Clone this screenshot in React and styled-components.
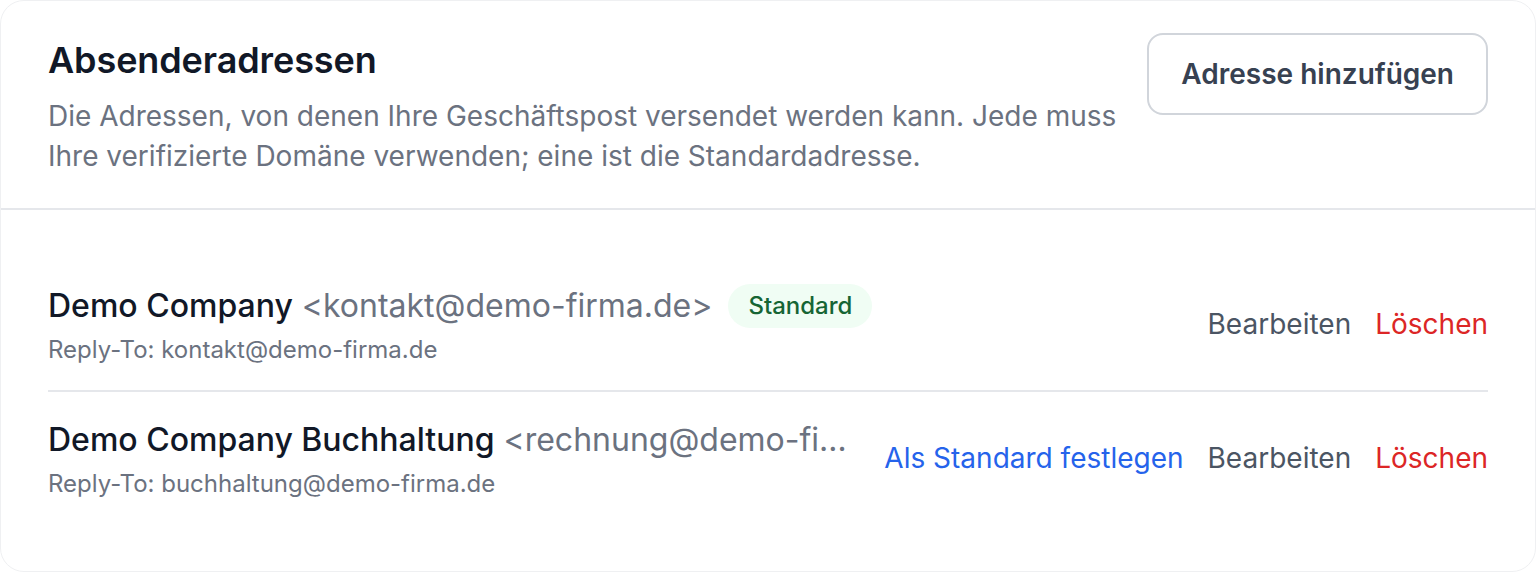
import React from 'react';
import styled, { createGlobalStyle } from 'styled-components';

const GlobalStyle = createGlobalStyle`
  html, body {
    margin: 0;
    padding: 0;
    background: #ffffff;
  }
  body {
    font-family: Inter, "Noto Sans", "Liberation Sans", sans-serif;
    -webkit-font-smoothing: antialiased;
  }
  * {
    box-sizing: border-box;
  }
`;

const senders = [
  {
    id: 1,
    name: 'Demo Company',
    email: 'kontakt@demo-firma.de',
    replyTo: 'kontakt@demo-firma.de',
    isDefault: true,
  },
  {
    id: 2,
    name: 'Demo Company Buchhaltung',
    email: 'rechnung@demo-firma.de',
    replyTo: 'buchhaltung@demo-firma.de',
    isDefault: false,
  },
];

const SenderRow = ({ sender }) => (
  <Row>
    <RowInfo>
      <NameLine>
        <NameText>
          <Name>{sender.name}</Name> <Email>&lt;{sender.email}&gt;</Email>
        </NameText>
        {sender.isDefault && <Badge>Standard</Badge>}
      </NameLine>
      <ReplyTo>Reply-To: {sender.replyTo}</ReplyTo>
    </RowInfo>
    <Actions>
      {!sender.isDefault && <LinkButton $tone="primary">Als Standard festlegen</LinkButton>}
      <LinkButton>Bearbeiten</LinkButton>
      <LinkButton $tone="danger">Löschen</LinkButton>
    </Actions>
  </Row>
);

const App = () => (
  <>
    <GlobalStyle />
    <Card>
      <Header>
        <HeaderText>
          <Title>Absenderadressen</Title>
          <Description>
            Die Adressen, von denen Ihre Geschäftspost versendet werden kann. Jede muss
            Ihre verifizierte Domäne verwenden; eine ist die Standardadresse.
          </Description>
        </HeaderText>
        <AddButton>Adresse hinzufügen</AddButton>
      </Header>
      <List>
        {senders.map(s => (
          <SenderRow key={s.id} sender={s} />
        ))}
      </List>
    </Card>
  </>
);

// Styled Components
const Card = styled.section`
  height: 572px;
  background: #ffffff;
  border: 1px solid #eff0f2;
  border-radius: 24px;
  overflow: hidden;
`;

const Header = styled.header`
  display: flex;
  align-items: flex-start;
  justify-content: space-between;
  gap: 16px;
  padding: 31px 47px 32px 47px;
  border-bottom: 2px solid #e5e7eb;
`;

const HeaderText = styled.div`
  flex: 1;
  min-width: 0;
`;

const Title = styled.h2`
  margin: 0;
  font-size: 36px;
  line-height: 56px;
  font-weight: 600;
  color: #111827;
  letter-spacing: -0.1px;
`;

const Description = styled.p`
  margin: 8px 0 0;
  max-width: 1080px;
  font-size: 28px;
  line-height: 40px;
  color: #6b7280;
`;

const AddButton = styled.button`
  flex-shrink: 0;
  margin-top: 1px;
  padding: 19px 32px;
  background: #ffffff;
  border: 2px solid #d1d5db;
  border-radius: 16px;
  font-family: inherit;
  font-size: 28px;
  line-height: 40px;
  font-weight: 600;
  color: #374151;
  cursor: pointer;
`;

const List = styled.div`
  padding: 48px 47px;
`;

const Row = styled.div`
  display: flex;
  align-items: center;
  justify-content: space-between;
  gap: 32px;
  padding: 24px 0;
  & + & {
    border-top: 2px solid #e5e7eb;
  }
`;

const RowInfo = styled.div`
  flex: 1 1 auto;
  min-width: 0;
`;

const NameLine = styled.div`
  display: flex;
  align-items: center;
  min-width: 0;
`;

const NameText = styled.div`
  min-width: 0;
  font-size: 32px;
  line-height: 48px;
  white-space: nowrap;
  overflow: hidden;
  text-overflow: ellipsis;
  color: #6b7280;
`;

const Name = styled.span`
  font-weight: 500;
  color: #111827;
`;

const Email = styled.span`
  color: #6b7280;
`;

const Badge = styled.span`
  flex-shrink: 0;
  margin-left: 16px;
  padding: 6px 20px;
  border-radius: 9999px;
  background: #f0fdf4;
  color: #166534;
  font-size: 24px;
  line-height: 32px;
  font-weight: 500;
`;

const ReplyTo = styled.div`
  margin-top: 4px;
  font-size: 24px;
  line-height: 32px;
  color: #6b7280;
`;

const Actions = styled.div`
  display: flex;
  align-items: center;
  gap: 24px;
  flex-shrink: 0;
`;

const toneColor = {
  primary: '#2563eb',
  danger: '#dc2626',
  default: '#4b5563',
};

const LinkButton = styled.button`
  padding: 0;
  background: none;
  border: none;
  font-family: inherit;
  font-size: 28px;
  line-height: 40px;
  font-weight: 400;
  color: ${p => toneColor[p.$tone || 'default']};
  cursor: pointer;
`;

export default App;
